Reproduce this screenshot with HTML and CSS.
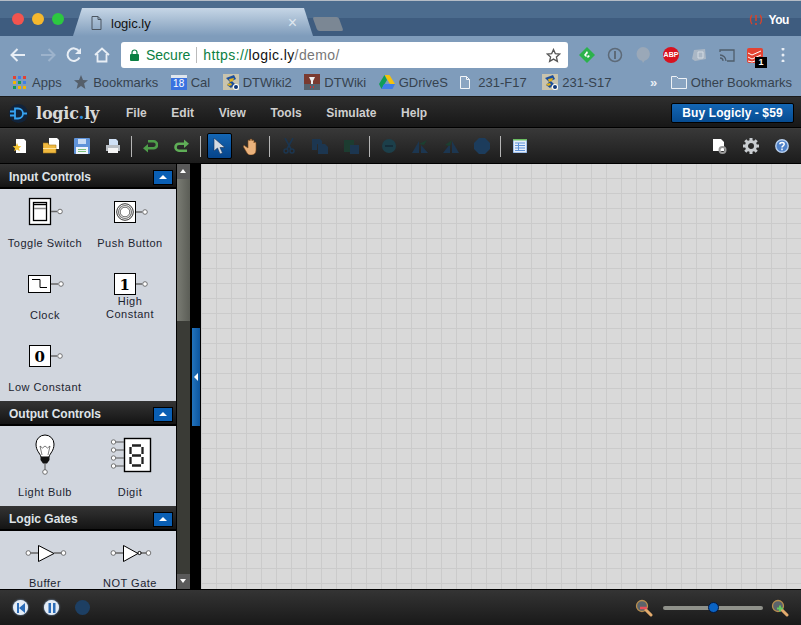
FILE: index.html
```html
<!DOCTYPE html>
<html lang="en">

<head>
    <meta charset="UTF-8">
    <title>logic.ly</title>
    <link rel="stylesheet" href="styles.css">
</head>

<body>
    <svg class="defs" width="0" height="0">
        <symbol id="site" viewBox="0 0 16 16">
            <rect width="16" height="16" fill="#c9c4ae"/>
            <path d="M3 4l8-3 2 4-4 2 3 3-4 4-4-3 3-3z" fill="#1d4f9c"/>
            <path d="M6 5l5-1-1 3-3 1zM4 10l4-1 1 2-3 1z" fill="#e3b31c"/>
            <circle cx="13" cy="13" r="3" fill="#fff"/><circle cx="13" cy="13" r="2" fill="#123a7a"/>
        </symbol>
    </svg>

    <header class="browser">
        <div class="tabstrip">
            <div class="lights"><i class="red"></i><i class="amber"></i><i class="green"></i></div>
            <div class="tab">
                <svg width="11" height="14" viewBox="0 0 11 14"><path d="M1 .5h6l3 3v10H1zM7 .5v3h3" fill="none" stroke="#4b5560"/></svg>
                <span class="tab-title">logic.ly</span>
                <span class="tab-close">×</span>
            </div>
            <div class="newtab"></div>
            <div class="profile">
                <svg width="14" height="12" viewBox="0 0 14 12"><path d="M3 1C1 3 1 8 3 10M11 1c2 2 2 7 0 9" fill="none" stroke="#d2452f" stroke-width="1.400"/><path d="M7 1v6M7 9v2" stroke="#d2452f" stroke-width="1.600"/></svg>
                <span>You</span>
            </div>
        </div>

        <div class="navbar">
            <svg class="nav-btn" width="16" height="14" viewBox="0 0 16 14"><path d="M15 7H2M7.500 1L1.500 7l6 6" fill="none" stroke="#e8eef5" stroke-width="2"/></svg>
            <svg class="nav-btn" width="16" height="14" viewBox="0 0 16 14"><path d="M1 7h13M8.500 1l6 6-6 6" fill="none" stroke="#9db3cc" stroke-width="2"/></svg>
            <svg class="nav-btn" width="16" height="16" viewBox="0 0 16 16"><path d="M13.500 10.500A6.300 6.300 0 1 1 13 4" fill="none" stroke="#e8eef5" stroke-width="2"/><path d="M15 1v6H9z" fill="#e8eef5"/></svg>
            <svg class="nav-btn" width="16" height="16" viewBox="0 0 16 16"><path d="M1 8l7-6.500L15 8M3.500 7v7.500h9V7" fill="none" stroke="#e8eef5" stroke-width="1.800"/></svg>
            <div class="omnibox">
                <svg width="9" height="12" viewBox="0 0 9 12"><path d="M2 5V3.500a2.500 2.500 0 0 1 5 0V5" fill="none" stroke="#0b8043" stroke-width="1.200"/><rect y="5" width="9" height="7" rx="1" fill="#0b8043"/></svg>
                <span class="secure">Secure</span>
                <span class="omni-sep"></span>
                <span class="url"><span class="scheme">https://</span><span class="host">logic.ly</span>/demo/</span>
                <svg class="omni-star" width="15" height="15" viewBox="0 0 15 15"><path d="M7.500 1.500l1.800 4.100 4.500.4-3.400 3 1 4.400-3.900-2.300-3.900 2.300 1-4.400-3.400-3 4.500-.4z" fill="none" stroke="#555" stroke-width="1.300"/></svg>
            </div>
            <div class="extensions">
                <svg width="18" height="18" viewBox="0 0 18 18"><path d="M9 1l8 8-8 8-8-8z" fill="#2bb24c"/><path d="M9 5L6 9l2 2 1-1-1-1 2-2zM10 9l-1 2 1 1 2-2z" fill="#fff"/></svg>
                <svg width="16" height="16" viewBox="0 0 16 16"><circle cx="8" cy="8" r="6.500" fill="none" stroke="#5d6a78" stroke-width="1.500"/><path d="M8 4v8" stroke="#5d6a78" stroke-width="2"/></svg>
                <svg width="14" height="16" viewBox="0 0 14 16"><path d="M7 0a7 7 0 0 1 1.500 13.800L7 16l-1-2.200A7 7 0 0 1 7 0z" fill="#9aa8b8"/></svg>
                <span class="abp">ABP</span>
                <svg width="16" height="14" viewBox="0 0 16 14"><path d="M3 2l11-1 1 10-11 2-3-2z" fill="#aab7c5"/><path d="M7 4h5v6H7z" fill="none" stroke="#d3dbe3"/></svg>
                <svg width="16" height="13" viewBox="0 0 16 13"><path d="M1 3V1h14v11H8" fill="none" stroke="#4f5d6c" stroke-width="1.300"/><path d="M1 6a6 6 0 0 1 6 6M1 9a3 3 0 0 1 3 3" fill="none" stroke="#4f5d6c" stroke-width="1.300"/></svg>
                <span class="todoist">
                    <svg width="16" height="15" viewBox="0 0 16 15"><rect width="16" height="15" rx="2" fill="#e44232"/><path d="M1 5l4 2 9-4M1 9l4 2 9-4M1 13l4 1 9-3" fill="none" stroke="#fff"/></svg>
                    <span class="todoist-count">1</span>
                </span>
                <svg width="4" height="14" viewBox="0 0 4 14"><path d="M2 1v.1M2 7v.1M2 13v.1" stroke="#e8eef5" stroke-width="3" stroke-linecap="round"/></svg>
            </div>
        </div>

        <div class="bookmarks">
            <a class="bm bm-apps"><svg width="13" height="14" viewBox="0 0 13 14"><path d="M0 1h3v3H0z" fill="#e44232"/><path d="M5 1h3v3H5z" fill="#3f7ee8"/><path d="M10 1h3v3h-3z" fill="#e44232"/><path d="M0 6h3v3H0z" fill="#f4b400"/><path d="M5 6h3v3H5z" fill="#0f9d58"/><path d="M10 6h3v3h-3z" fill="#3f7ee8"/><path d="M0 11h3v3H0z" fill="#0f9d58"/><path d="M5 11h3v3H5z" fill="#f4b400"/><path d="M10 11h3v3h-3z" fill="#f4b400"/></svg>Apps</a>
            <a class="bm bm-star"><svg width="14" height="14" viewBox="0 0 14 14"><path d="M7 0l2 5 5 .3-3.900 3.200L11.400 14 7 11l-4.400 3 1.300-5.500L0 5.300 5 5z" fill="#555f6b"/></svg>Bookmarks</a>
            <a class="bm"><span class="cal">18</span>Cal</a>
            <a class="bm"><svg width="16" height="16"><use href="#site"/></svg>DTWiki2</a>
            <a class="bm"><svg width="16" height="16" viewBox="0 0 16 16"><rect width="16" height="16" fill="#7a3a30"/><rect y="10" width="16" height="6" fill="#56626e"/><path d="M5 3h6L9 7v3H7V7z" fill="#eee"/><path d="M6 12h1v2H6zM9 12h1v2H9z" fill="#c33"/></svg>DTWiki</a>
            <a class="bm"><svg width="16" height="14" viewBox="0 0 16 14"><path d="M5.500 0h5L16 9h-5z" fill="#f4c20d"/><path d="M5.500 0L0 9l2.500 5L8 5z" fill="#0f9d58"/><path d="M2.500 14h11L16 9H5z" fill="#3f7ee8"/></svg>GDriveS</a>
            <a class="bm bm-doc"><svg width="10" height="13" viewBox="0 0 10 13"><path d="M.5.500h6l3 3v9H.5zM6.500.500v3h3" fill="#8aa5c2" stroke="#f2f5f8"/></svg>231-F17</a>
            <a class="bm"><svg width="16" height="16"><use href="#site"/></svg>231-S17</a>
            <span class="bm-more">»</span>
            <a class="bm"><svg width="16" height="13" viewBox="0 0 16 13"><path d="M.5 12.500V.5h5l2 2h8v10z" fill="#8aa5c2" stroke="#eef2f6"/></svg>Other Bookmarks</a>
        </div>
    </header>

    <div class="app">
        <div class="menubar">
            <div class="logo">
                <svg width="19" height="19" viewBox="0 0 19 19"><circle cx="9.500" cy="9.500" r="9.500" fill="#11233a"/><path d="M1 7.500h5M1 11.500h5M6 4.500h3a5 5 0 0 1 0 10H6zM14 9.500h4" fill="none" stroke="#36a3f2" stroke-width="1.800"/></svg>
                <span class="logo-text">logic<b>.</b>ly</span>
            </div>
            <nav class="menu">
                <a>File</a><a>Edit</a><a>View</a><a>Tools</a><a>Simulate</a><a>Help</a>
            </nav>
            <button class="buy">Buy Logicly - $59</button>
        </div>

        <div class="toolbar">
            <span class="tool"><svg width="16" height="16" viewBox="0 0 16 16"><path d="M4 1h8l2 2v12H4z" fill="#fff"/><path d="M5 5l1.300 3 3 .2-2.300 2 .8 3L5 11.600 2.200 13.200l.8-3-2.300-2 3-.2z" fill="#f2c230"/></svg></span>
            <span class="tool"><svg width="16" height="16" viewBox="0 0 16 16"><path d="M6 0h8l2 2v9H6z" fill="#fff"/><path d="M0 5h5l1 2h7v8H0z" fill="#f0b93f" stroke="#a97a1d" stroke-width=".6"/><path d="M0 10h13v1H0z" fill="#ffe39a"/></svg></span>
            <span class="tool"><svg width="16" height="16" viewBox="0 0 16 16"><rect width="16" height="16" rx="1" fill="#5f93d9"/><path d="M4 1h8v5H4z" fill="#c9dcf5"/><path d="M2 9h12v7H2z" fill="#eef4fb"/><path d="M4 11h8v1H4zM4 13h8v1H4z" fill="#7cc07c"/></svg></span>
            <span class="tool"><svg width="16" height="16" viewBox="0 0 16 16"><path d="M4 1h7l2 2v5H4z" fill="#cfe0f5"/><path d="M1 7h14v6H1z" fill="#b9bec4"/><path d="M3 10h10v5H3z" fill="#f4f4f4"/></svg></span>
            <i class="sep"></i>
            <span class="tool"><svg width="15" height="14" viewBox="0 0 15 14"><path d="M5 2.300h5.500a3.500 3.500 0 0 1 0 7H4" fill="none" stroke="#4e9e4a" stroke-width="2.600"/><path d="M5 5L0 9.300 5 13.500z" fill="#4e9e4a"/></svg></span>
            <span class="tool"><svg width="15" height="14" viewBox="0 0 15 14"><path d="M13 11.700H5a3.500 3.500 0 0 1 0-7h5" fill="none" stroke="#5fae57" stroke-width="2.600"/><path d="M10 .5L15 4.700 10 9z" fill="#5fae57"/></svg></span>
            <i class="sep"></i>
            <span class="tool tool-on"><svg width="14" height="18" viewBox="0 0 14 18"><path d="M1 1v13l3.500-3 2.500 6 2.500-1-2.500-5.500H12z" fill="#d5dbe2" stroke="#17325a" stroke-width=".6"/></svg></span>
            <span class="tool"><svg width="15" height="17" viewBox="0 0 15 17"><path d="M2 8c-1-1-2 0-1.500 1L4 15c1 1.500 2 2 4 2 3 0 5-1.500 5-5V5c0-1.500-2-1.500-2 0V3c0-1.500-2-1.500-2 0V2C9 .5 7 .5 7 2v1c0-1.500-2-1.500-2 0v7z" fill="#eab27c" stroke="#7a4a1c" stroke-width=".6"/></svg></span>
            <i class="sep"></i>
            <span class="tool"><svg width="12" height="16" viewBox="0 0 12 16"><path d="M2 0l6 11M10 0L4 11" stroke="#1c3650" stroke-width="1.600"/><circle cx="3" cy="13" r="2" fill="none" stroke="#1c3650" stroke-width="1.500"/><circle cx="9" cy="13" r="2" fill="none" stroke="#1c3650" stroke-width="1.500"/></svg></span>
            <span class="tool"><svg width="16" height="15" viewBox="0 0 16 15"><path d="M0 0h8l2 2v3H5v6H0z" fill="#1c3650"/><path d="M6 5h7l3 3v7H6z" fill="#1c3650"/></svg></span>
            <span class="tool"><svg width="16" height="15" viewBox="0 0 16 15"><path d="M1 1h10v5H7v7H1z" fill="#1c3c30"/><path d="M7 6h9v9H7z" fill="#1c3650"/></svg></span>
            <i class="sep"></i>
            <span class="tool"><svg width="14" height="14" viewBox="0 0 14 14"><circle cx="7" cy="7" r="7" fill="#1c3f4a"/><path d="M3 7h8" stroke="#152c38" stroke-width="2"/></svg></span>
            <span class="tool"><svg width="16" height="14" viewBox="0 0 16 14"><path d="M0 14L7 2v12z" fill="#1c3650"/><path d="M9 14V6l7 8z" fill="#1c3650"/><path d="M7 5l8-4-3 5z" fill="#1c3f30"/></svg></span>
            <span class="tool"><svg width="16" height="14" viewBox="0 0 16 14"><path d="M0 14L7 5v9z" fill="#1c3650"/><path d="M9 14V2l7 12z" fill="#1c3650"/><path d="M2 6l7-5-2 6z" fill="#1c3f30"/></svg></span>
            <span class="tool"><svg width="16" height="16" viewBox="0 0 16 16"><path d="M5 0h6l5 5v6l-5 5H5l-5-5V5z" fill="#1c3c5c"/></svg></span>
            <i class="sep"></i>
            <span class="tool"><svg width="14" height="14" viewBox="0 0 14 14"><rect width="14" height="14" fill="#e6eefa" stroke="#5f93d9"/><path d="M0 .5h14" stroke="#6bbd62" stroke-width="2"/><path d="M2 4h10M2 6.500h10M2 9h10M2 11.500h10M5.500 4v8" stroke="#5f93d9"/></svg></span>
            <span class="toolbar-right">
                <span class="tool"><svg width="14" height="15" viewBox="0 0 14 15"><path d="M0 0h8l3 3v9H0z" fill="#fff"/><circle cx="9.500" cy="11" r="3" fill="none" stroke="#999" stroke-width="2"/></svg></span>
                <span class="tool"><svg width="16" height="16" viewBox="0 0 16 16"><circle cx="8" cy="8" r="4.500" fill="none" stroke="#c9cdd1" stroke-width="3"/><path d="M8 0v3M8 13v3M0 8h3M13 8h3M2.300 2.300l2.200 2.200M11.500 11.500l2.200 2.200M13.700 2.300l-2.200 2.200M4.500 11.500l-2.200 2.200" stroke="#c9cdd1" stroke-width="3"/></svg></span>
                <span class="tool"><svg width="14" height="14" viewBox="0 0 14 14"><circle cx="7" cy="7" r="6.200" fill="#4f82c9" stroke="#b9d0ee" stroke-width="1.400"/><path d="M4.800 5.300C5 3 9.200 3 9.200 5.300 9.200 6.800 7 6.800 7 8.400M7 9.600v1.600" fill="none" stroke="#fff" stroke-width="1.500"/></svg></span>
            </span>
        </div>

        <div class="workspace">
            <aside class="palette">
                <h3 class="group">Input Controls<span class="collapse"></span></h3>
                <div class="items items-input">
                    <div class="item">
                        <svg width="90" height="46" viewBox="0 189 90 46"><rect x="29.500" y="198.500" width="21" height="26" fill="#fff" stroke="#000" stroke-width="1.300"/><rect x="33.500" y="202.500" width="13" height="18" fill="#fff" stroke="#000" stroke-width="1.300"/><path d="M34 204.500h12" stroke="#000" stroke-width="1.400"/><path d="M34 208.500h12" stroke="#888" stroke-width="1.500"/><path d="M51 211.500h6" stroke="#666" stroke-width="1.500"/><circle cx="60" cy="211.500" r="2.300" fill="#fff" stroke="#555" stroke-width=".8"/></svg>
                        <span>Toggle Switch</span>
                    </div>
                    <div class="item">
                        <svg width="80" height="46" viewBox="90 189 80 46"><rect x="114.500" y="201.500" width="21" height="21" fill="#fff" stroke="#000"/><circle cx="125" cy="212" r="8.300" fill="none" stroke="#333"/><circle cx="125" cy="212" r="6.500" fill="none" stroke="#777" stroke-width="1.200"/><circle cx="125" cy="212" r="4.800" fill="none" stroke="#444" stroke-width=".8"/><path d="M136 212h6" stroke="#666" stroke-width="1.500"/><circle cx="145" cy="212" r="2.300" fill="#fff" stroke="#555" stroke-width=".8"/></svg>
                        <span>Push Button</span>
                    </div>
                    <div class="item">
                        <svg width="90" height="46" viewBox="0 261 90 46"><rect x="28.500" y="275.500" width="22" height="17" fill="#fff" stroke="#000"/><path d="M32 279.500h8v8h7" fill="none" stroke="#000"/><path d="M51 284h7" stroke="#666" stroke-width="1.500"/><circle cx="61" cy="284" r="2.300" fill="#fff" stroke="#555" stroke-width=".8"/></svg>
                        <span>Clock</span>
                    </div>
                    <div class="item">
                        <svg class="icon-short" width="80" height="32" viewBox="90 261 80 32"><rect x="114.500" y="273.500" width="21" height="21" fill="#fff" stroke="#000"/><text x="125" y="290" class="bit">1</text><path d="M136 284h6" stroke="#666" stroke-width="1.500"/><circle cx="145" cy="284" r="2.300" fill="#fff" stroke="#555" stroke-width=".8"/></svg>
                        <span>High<br>Constant</span>
                    </div>
                    <div class="item">
                        <svg width="90" height="46" viewBox="0 333 90 46"><rect x="29.500" y="345.500" width="21" height="21" fill="#fff" stroke="#000"/><text x="40" y="362" class="bit">0</text><path d="M51 356h6" stroke="#666" stroke-width="1.500"/><circle cx="60" cy="356" r="2.300" fill="#fff" stroke="#555" stroke-width=".8"/></svg>
                        <span>Low Constant</span>
                    </div>
                </div>

                <h3 class="group">Output Controls<span class="collapse"></span></h3>
                <div class="items items-output">
                    <div class="item">
                        <svg width="90" height="58" viewBox="0 426 90 58"><path d="M41 457c-1-4-5-6-5-13a9 9 0 0 1 18 0c0 7-4 9-5 13z" fill="#fff" stroke="#000"/><path d="M42 455l-2-9 2.500 2 2.500-2 2.500 2 2.500-2-2 9" fill="none" stroke="#444" stroke-width=".7"/><path d="M40.500 457h9v3l-2.500 3.500h-4L40.500 460z" fill="#111"/><path d="M45 463v7" stroke="#555"/><circle cx="45" cy="472" r="2.300" fill="#fff" stroke="#555" stroke-width=".8"/></svg>
                        <span>Light Bulb</span>
                    </div>
                    <div class="item">
                        <svg width="80" height="58" viewBox="90 426 80 58"><rect x="124.500" y="438.500" width="26" height="33" fill="#fff" stroke="#000" stroke-width="1.400"/><path d="M132 445.500h9M130.500 447v7M142.500 447v7M132 455.500h9M130.500 457v7M142.500 457v7M132 465.500h9" stroke="#222" stroke-width="2.300"/><path d="M116 442h8M116 450h8M116 458h8M116 466h8" stroke="#555"/><circle cx="113.500" cy="442" r="2.200" fill="#fff" stroke="#555" stroke-width=".8"/><circle cx="113.500" cy="450" r="2.200" fill="#fff" stroke="#555" stroke-width=".8"/><circle cx="113.500" cy="458" r="2.200" fill="#fff" stroke="#555" stroke-width=".8"/><circle cx="113.500" cy="466" r="2.200" fill="#fff" stroke="#555" stroke-width=".8"/></svg>
                        <span>Digit</span>
                    </div>
                </div>

                <h3 class="group">Logic Gates<span class="collapse"></span></h3>
                <div class="items items-gates">
                    <div class="item">
                        <svg width="90" height="44" viewBox="0 531 90 44"><path d="M30 553h9M54 553h8" stroke="#666" stroke-width="1.500"/><path d="M38.500 545.500v16l15.500-8z" fill="#fff" stroke="#000"/><circle cx="28.300" cy="553" r="2.300" fill="#fff" stroke="#555" stroke-width=".8"/><circle cx="63.500" cy="553" r="2.300" fill="#fff" stroke="#555" stroke-width=".8"/></svg>
                        <span>Buffer</span>
                    </div>
                    <div class="item">
                        <svg width="80" height="44" viewBox="90 531 80 44"><path d="M115 553h9M141 553h6" stroke="#666" stroke-width="1.500"/><path d="M123.500 545.500v16l14.500-8z" fill="#fff" stroke="#000"/><circle cx="139.500" cy="553" r="1.600" fill="#fff" stroke="#000"/><circle cx="113.300" cy="553" r="2.300" fill="#fff" stroke="#555" stroke-width=".8"/><circle cx="148.500" cy="553" r="2.300" fill="#fff" stroke="#555" stroke-width=".8"/></svg>
                        <span>NOT Gate</span>
                    </div>
                </div>
            </aside>

            <div class="scrollbar">
                <span class="scroll-arrow up"></span>
                <span class="scroll-thumb"></span>
                <span class="scroll-track"></span>
                <span class="scroll-arrow down"></span>
            </div>

            <div class="divider"><span class="divider-handle"></span></div>

            <main class="canvas"></main>
        </div>

        <div class="statusbar">
            <span class="round-btn"><svg width="10" height="10" viewBox="0 0 10 10"><path d="M1 0h2v10H1zM9 0v10L3 5z" fill="#2b6cb8"/></svg></span>
            <span class="round-btn"><svg width="10" height="10" viewBox="0 0 10 10"><path d="M1.500 0h2.500v10H1.500zM6 0h2.500v10H6z" fill="#2b6cb8"/></svg></span>
            <span class="round-btn round-off"></span>
            <div class="zoom">
                <svg width="18" height="18" viewBox="0 0 18 18"><circle cx="7" cy="7" r="5.500" fill="#5b636b" stroke="#b98f4e" stroke-width="1.300"/><path d="M11 11l5 5" stroke="#e3ab6d" stroke-width="3" stroke-linecap="round"/><path d="M5 9h7" stroke="#e8505b" stroke-width="2.500"/></svg>
                <span class="zoom-track"><span class="zoom-thumb"></span></span>
                <svg width="18" height="18" viewBox="0 0 18 18"><circle cx="7" cy="7" r="5.500" fill="#5b636b" stroke="#b98f4e" stroke-width="1.300"/><path d="M11 11l5 5" stroke="#e3ab6d" stroke-width="3" stroke-linecap="round"/><path d="M6 9.500h6M9 6.500v6" stroke="#63c95f" stroke-width="2"/></svg>
            </div>
        </div>
    </div>
</body>

</html>
```

FILE: styles.css
```css
* {
    box-sizing: border-box;
    margin: 0;
    padding: 0;
}

html,
body {
    width: 801px;
    height: 625px;
    overflow: hidden;
    font-family: "Liberation Sans", sans-serif;
}

.defs {
    display: block;
    height: 0;
}

svg {
    display: block;
    flex: none;
}

/* browser frame */

.browser {
    height: 96px;
    background: #7f9cbb;
}

.tabstrip {
    height: 36px;
    display: flex;
    align-items: flex-end;
    padding-left: 73px;
    position: relative;
    background: linear-gradient(#4c6c8e 0, #4c6c8e 17px, #3e5c7f 17px, #3e5c7f 100%);
    border-top: 1px solid #b4bcc6;
}

.lights {
    position: absolute;
    left: 12px;
    top: 12px;
    display: flex;
    gap: 8px;
}

.lights i {
    width: 12px;
    height: 12px;
    border-radius: 50%;
}

.red { background: #f2544f; }
.amber { background: #f5b82e; }
.green { background: #2cc840; }

.tab {
    width: 240px;
    height: 28px;
    display: flex;
    align-items: center;
    padding: 2px 16px 0 18px;
    gap: 9px;
    background: linear-gradient(#c6d6e6, #7f9cbb);
    clip-path: polygon(9px 0, 231px 0, 100% 100%, 0 100%);
}

.tab-title {
    font-size: 13px;
    color: #111;
    flex: 1;
}

.tab-close {
    color: #dfe7ef;
    font-size: 16px;
}

.newtab {
    width: 26px;
    height: 14px;
    margin: 0 0 5px 2px;
    background: #7b8794;
    transform: skewX(20deg);
    border-radius: 2px;
}

.profile {
    margin-left: auto;
    display: flex;
    align-items: center;
    gap: 5px;
    padding: 0 12px 9px 0;
    color: #fff;
    font-size: 12px;
    font-weight: 700;
    letter-spacing: -.4px;
}

.navbar {
    height: 32px;
    display: flex;
    align-items: center;
    padding: 6px 0 0 10px;
}

.nav-btn {
    margin-right: 12px;
}

.nav-btn:first-child {
    margin-right: 14px;
}

.nav-btn:nth-child(2) {
    margin-right: 10px;
}

.omnibox {
    width: 447px;
    height: 26px;
    margin-left: -1px;
    display: flex;
    align-items: center;
    padding: 0 7px 0 9px;
    background: #fff;
    border-radius: 3px;
    font-size: 14px;
}

.secure {
    color: #0b8043;
    margin-left: 7px;
}

.omni-sep {
    width: 1px;
    height: 16px;
    margin: 0 6px;
    background: #bbb;
}

.url {
    color: #777;
    letter-spacing: .4px;
}

.scheme {
    color: #0b8043;
}

.host {
    color: #111;
}

.omni-star {
    margin-left: auto;
}

.extensions {
    display: grid;
    grid-template-columns: repeat(8, 28px);
    justify-items: center;
    align-items: center;
    margin-left: 5px;
}

.abp {
    width: 16px;
    height: 16px;
    background: #d9121f;
    border-radius: 50%;
    color: #fff;
    font-size: 7px;
    font-weight: 700;
    text-align: center;
    line-height: 16px;
}

.todoist {
    position: relative;
}

.todoist-count {
    position: absolute;
    right: -4px;
    bottom: -5px;
    width: 12px;
    height: 11px;
    background: #000;
    color: #fff;
    font-size: 9px;
    font-weight: 700;
    line-height: 11px;
    text-align: center;
}

.bookmarks {
    height: 28px;
    display: flex;
    align-items: center;
    gap: 12.5px;
    padding: 0 9px 0 13px;
    font-size: 13px;
    color: #36424e;
}

.bm {
    display: flex;
    align-items: center;
    gap: 4px;
}

.bm-apps { gap: 6px; }
.bm-star { gap: 5px; }

.bm-doc {
    margin: 0 3px 0 0;
    gap: 8px;
}

.cal {
    width: 16px;
    height: 15px;
    background: #3a72e0;
    border-top: 3px solid #dfe6ee;
    color: #fff;
    font-size: 10px;
    line-height: 12px;
    text-align: center;
}

.bm-more {
    margin-left: auto;
    color: #e8eef5;
    font-size: 13px;
    font-weight: 700;
    margin-right: 1px;
}

/* app */

.app {
    height: 529px;
    display: flex;
    flex-direction: column;
    background: #111;
    border-top: 1px solid #1a1a1a;
}

.menubar {
    height: 31px;
    display: flex;
    align-items: center;
    padding: 2px 7px 0 9px;
    background: linear-gradient(#2e2e2e, #171717);
    border-bottom: 1px solid #000;
}

.logo {
    width: 117px;
    display: flex;
    align-items: center;
    gap: 8px;
}

.logo-text {
    font-family: "DejaVu Serif", serif;
    font-size: 16px;
    font-weight: 700;
    letter-spacing: -.2px;
    color: #d8d8d8;
}

.logo-text b {
    color: #2f8fe0;
}

.menu {
    display: flex;
    gap: 24.7px;
}

.menu a {
    font-size: 12px;
    font-weight: 700;
    color: #cfcfcf;
}

.buy {
    margin-left: auto;
    width: 123px;
    height: 20px;
    background: linear-gradient(#1466b4, #064b91);
    border: 1px solid #000;
    border-radius: 2px;
    color: #fff;
    font-family: "Liberation Sans", sans-serif;
    font-size: 12px;
    font-weight: 700;
    letter-spacing: .1px;
}

.toolbar {
    height: 36px;
    display: flex;
    align-items: center;
    padding: 0 4px;
    background: linear-gradient(#383838, #1c1c1c);
    border-top: 1px solid #3c3c3c;
    border-bottom: 1px solid #000;
}

.tool {
    width: 31px;
    height: 26px;
    display: flex;
    align-items: center;
    justify-content: center;
}

.tool-on {
    width: 25px;
    margin: 0 3px;
    background: linear-gradient(#1466b4, #06448a);
    border: 1px solid #000;
    border-radius: 2px;
}

.sep {
    width: 1px;
    height: 21px;
    margin: 0 3px;
    background: #b5b5b5;
}

.toolbar-right {
    margin-left: auto;
    display: flex;
}

.workspace {
    flex: 1;
    display: flex;
    min-height: 0;
}

.palette {
    width: 177px;
    background: #d1d6de;
    overflow: hidden;
    border-right: 1px solid #000;
}

.group {
    height: 25px;
    display: flex;
    align-items: center;
    justify-content: space-between;
    padding: 3px 3px 0 9px;
    background: linear-gradient(#343434, #141414);
    border-bottom: 2px solid #000;
    font-size: 12px;
    font-weight: 700;
    color: #dfe3e8;
}

.collapse {
    width: 20px;
    height: 15px;
    background: #0a5fb4;
    border: 1px solid #000;
    position: relative;
}

.collapse::after {
    content: "";
    position: absolute;
    left: 5px;
    top: 4px;
    border: 4px solid transparent;
    border-top: 0;
    border-bottom: 4px solid #fff;
}

.items {
    display: grid;
    grid-template-columns: 90px 80px;
    grid-auto-rows: 72px;
}

.items-input { height: 212px; }
.items-output { height: 80px; }

.item {
    text-align: center;
    font-size: 11px;
    line-height: 13px;
    letter-spacing: .5px;
    color: #1c2430;
}

.item span {
    display: block;
    margin-top: 2px;
}

.icon-short {
    overflow: visible;
}

.bit {
    font-family: "DejaVu Serif", serif;
    font-size: 15px;
    font-weight: 700;
    text-anchor: middle;
}

.scrollbar {
    width: 13px;
    display: flex;
    flex-direction: column;
    background: #3a3b36;
}

.scroll-arrow {
    height: 15px;
    background: #5a5a5a;
    position: relative;
}

.scroll-arrow::after {
    content: "";
    position: absolute;
    left: 3px;
    top: 5px;
    border: 3.500px solid transparent;
}

.up::after {
    border-top: 0;
    border-bottom: 4px solid #fff;
}

.down::after {
    border-bottom: 0;
    border-top: 4px solid #fff;
}

.scroll-thumb {
    height: 142px;
    background: linear-gradient(90deg, #7a7c74, #5b5d56);
}

.scroll-track {
    flex: 1;
}

.divider {
    width: 11px;
    display: flex;
    padding: 164px 1px 0 2px;
    background: #000;
}

.divider-handle {
    width: 8px;
    height: 98px;
    background: linear-gradient(90deg, #2273bd, #0c559e);
    position: relative;
}

.divider-handle::after {
    content: "";
    position: absolute;
    left: 2px;
    top: 45px;
    border: 4px solid transparent;
    border-left: 0;
    border-right: 4px solid #fff;
}

.canvas {
    flex: 1;
    background-color: #d9d9d9;
    background-image: linear-gradient(#cbcbcb 1px, transparent 1px), linear-gradient(90deg, #cbcbcb 1px, transparent 1px);
    background-size: 15px 15px;
    background-position: 0 -1px;
}

.statusbar {
    height: 36px;
    display: flex;
    align-items: center;
    gap: 16px;
    padding: 0 12px 0 13px;
    background: linear-gradient(#343434, #191919);
    border-top: 1px solid #000;
}

.round-btn {
    width: 15px;
    height: 15px;
    display: flex;
    align-items: center;
    justify-content: center;
    border-radius: 50%;
    background: #e4ecf6;
    box-shadow: 0 0 2px #9cc0ec;
}

.round-off {
    background: #1d3f63;
    box-shadow: none;
}

.zoom {
    margin-left: auto;
    display: flex;
    align-items: center;
    gap: 9px;
}

.zoom-track {
    width: 100px;
    height: 4px;
    margin: 0 -1px 0 1px;
    display: flex;
    align-items: center;
    justify-content: center;
    background: #8f918a;
    border-radius: 2px;
}

.zoom-thumb {
    width: 11px;
    height: 11px;
    background: #0a63c4;
    border: 1px solid #04183f;
    border-radius: 50%;
}
```
